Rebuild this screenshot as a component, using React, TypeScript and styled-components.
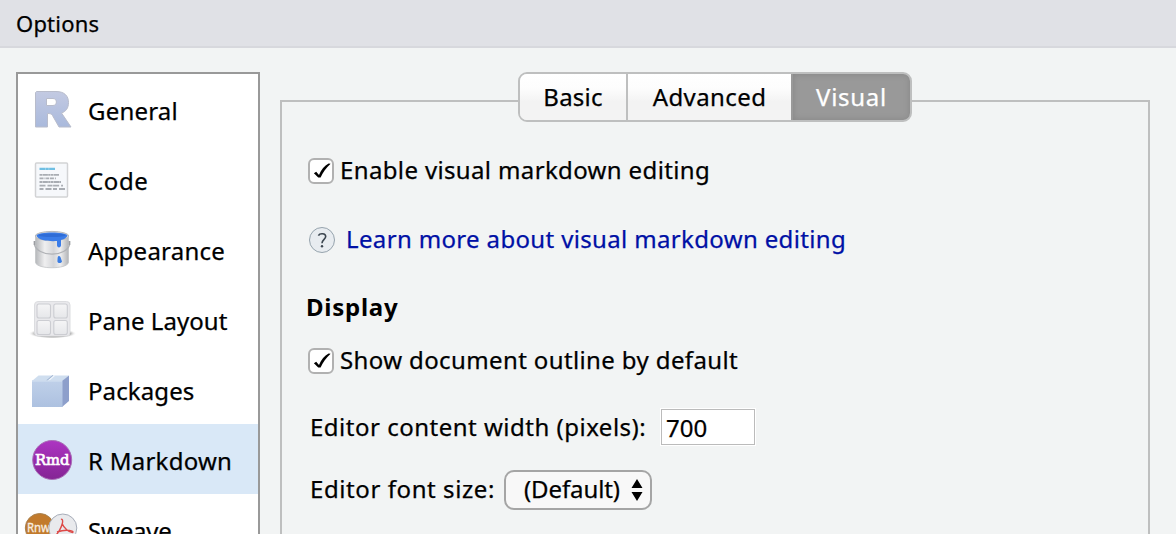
import React, { useState } from "react";
import styled, { createGlobalStyle, css } from "styled-components";

const GlobalStyle = createGlobalStyle`
  *, *::before, *::after { box-sizing: border-box; }
  body {
    margin: 0;
    overflow: hidden;
    background: #f2f4f4;
    color: #000;
    font-family: "Noto Sans", "Liberation Sans", sans-serif;
    font-size: 24px;
    line-height: 34px;
    -webkit-text-stroke: 0.25px;
  }
`;

const Dialog = styled.div`
  height: 534px;
  overflow: hidden;
`;

const TitleBar = styled.header`
  height: 48px;
  padding: 6px 16px 0;
  background: #e0e1e6;
  border-bottom: 2px solid #d7d8dd;
  font-size: 22px;
  letter-spacing: 0.2px;
`;

const Body = styled.div`
  display: flex;
  align-items: flex-start;
  gap: 20px;
  padding: 24px 26px 0 16px;
`;

const Sidebar = styled.nav`
  flex: none;
  width: 244px;
  height: 620px;
  border: 2px solid #999;
  background: #fff;
`;

const SectionItem = styled.div<{ $selected: boolean; $spacing: number }>`
  display: flex;
  align-items: center;
  gap: 8px;
  height: 70px;
  padding-left: 2px;
  background: ${(p) => (p.$selected ? "#d9e8f7" : "#fff")};
  letter-spacing: ${(p) => p.$spacing}px;
  white-space: nowrap;
  cursor: pointer;
`;

const ItemLabel = styled.span`
  padding-top: 4px;
`;

const SectionIcon = styled.svg`
  flex: none;
  width: 60px;
  height: 70px;
  letter-spacing: 0;
  -webkit-text-stroke: 0;
`;

const Content = styled.main`
  flex: 1;
`;

const TabBar = styled.div`
  position: relative;
  display: flex;
  width: 394px;
  height: 50px;
  margin: 0 auto;
  border: 2px solid #bebfbf;
  border-radius: 9px;
  overflow: hidden;
`;

const Tab = styled.button<{ $width: number; $spacing: number; $active: boolean }>`
  flex: none;
  width: ${(p) => p.$width}px;
  padding: 0 0 1px;
  border: 0;
  background: linear-gradient(#fff 0%, #fdfdfd 30%, #f3f3f3 60%, #f3f3f3 100%);
  color: #000;
  font: inherit;
  letter-spacing: ${(p) => p.$spacing}px;
  & + & { border-left: 2px solid #bebfbf; }
  ${(p) =>
    p.$active &&
    css`
      && {
        border-left-color: #999;
        background: #999;
        color: #fff;
        box-shadow: inset 0 0 6px #858585;
      }
    `}
`;

const Panel = styled.section`
  height: 600px;
  margin-top: -22px;
  padding: 56px 24px 0;
  border: 2px solid #bebfbf;
`;

const CheckRow = styled.label<{ $spacing: number }>`
  display: flex;
  align-items: center;
  gap: 6px;
  height: 26px;
  padding-left: 2px;
  letter-spacing: ${(p) => p.$spacing}px;
  white-space: nowrap;
`;

const CheckText = styled.span`
  margin-top: -3px;
`;

const CheckBox = styled.span`
  display: flex;
  width: 26px;
  height: 26px;
  border: 2px solid #b1b1b1;
  border-radius: 6px;
  background: #fff;
`;

const HelpRow = styled.div`
  display: flex;
  align-items: center;
  gap: 10px;
  height: 28px;
  margin-top: 42px;
  padding-left: 2px;
`;

const HelpLink = styled.a`
  margin-top: -2px;
  color: #0010a5;
  letter-spacing: 0.35px;
  white-space: nowrap;
`;

const Heading = styled.h2`
  height: 34px;
  margin: 36px 0 24px;
  font-size: 24px;
  font-weight: 700;
  letter-spacing: 0.75px;
  -webkit-text-stroke: 0;
`;

const Field = styled.div<{ $height: number; $top: number; $gap: number }>`
  display: flex;
  align-items: center;
  gap: ${(p) => p.$gap}px;
  height: ${(p) => p.$height}px;
  margin-top: ${(p) => p.$top}px;
  padding-left: 4px;
`;

const FieldLabel = styled.span<{ $width: number; $spacing: number; $raise?: number }>`
  width: ${(p) => p.$width}px;
  padding-bottom: ${(p) => p.$raise ?? 0}px;
  letter-spacing: ${(p) => p.$spacing}px;
  white-space: nowrap;
`;

const NumberInput = styled.input`
  width: 94px;
  height: 36px;
  padding: 0 2px 0 4px;
  border: 1px solid #bbb;
  outline: 1px solid #fff;
  background: #fff;
  color: #000;
  font: inherit;
`;

const Select = styled.button`
  display: flex;
  align-items: center;
  justify-content: space-between;
  width: 148px;
  height: 40px;
  padding: 0 7px 0 18px;
  border: 2px solid #a5a5a5;
  border-radius: 10px;
  background: #f8f8f8;
  color: #000;
  font: inherit;
  letter-spacing: -0.1px;
`;

const SelectValue = styled.span`
  padding-bottom: 2px;
`;

function CheckMark() {
  return (
    <CheckBox>
      <svg width="22" height="22" viewBox="0 0 22 22">
        <path d="M3.900 13.200l2.300-1.500 2.800 3.200C11.200 9.700 14.400 6 18.600 3.600l2 .1C16 8 13 12.400 10.600 17.400H8.200Z" fill="#000" />
      </svg>
    </CheckBox>
  );
}

const icons: Record<string, React.ReactNode> = {
  General: (
    <>
      <defs>
        <linearGradient id="gr" x1="0" y1="0" x2="0" y2="1">
          <stop offset="0" stopColor="#c3cae2" />
          <stop offset="1" stopColor="#a9b9dc" />
        </linearGradient>
      </defs>
      <path
        fillRule="evenodd"
        d="M36.500 17.500H56C64.500 17.500 68.500 22 68.500 28.500C68.500 34 66 37.500 61.500 39L71 53H59L52.500 41.500C51.500 39.800 50 39.500 47.500 39.500V53H35.500V18.500ZM46.500 24.500V31.500H53C57.500 31.500 57.500 24.500 53 24.500Z"
        fill="url(#gr)"
        stroke="#b8bccb"
      />
    </>
  ),
  Code: (
    <>
      <rect x="35.500" y="19" width="32" height="34" rx="1" fill="#f6f8fb" stroke="#d2d3d5" strokeWidth="1.500" />
      <path d="M39.500 24.800H55" stroke="#6fbfe3" strokeWidth="2.200" strokeDasharray="6 .3 3 .3" />
      <g stroke="#a9adb3" strokeWidth="1.800" strokeDasharray="3 .4 5 .3 2 .4">
        <path d="M39.500 30.800H59" />
        <path d="M39.500 34.300H56" strokeDasharray="4 1 1 .6 3 .8" />
        <path d="M39.500 38H61" />
        <path d="M39.500 41.600H63" strokeDasharray="6 2 5 .6" />
        <path d="M39.500 45H65" strokeDasharray="4 2 6 1.500" />
      </g>
    </>
  ),
  Appearance: (
    <>
      <defs>
        <linearGradient id="metal">
          <stop offset="0" stopColor="#b5b7ba" />
          <stop offset=".28" stopColor="#efeff0" />
          <stop offset=".55" stopColor="#d5d6d9" />
          <stop offset=".75" stopColor="#eeeeef" />
          <stop offset="1" stopColor="#b2b4b7" />
        </linearGradient>
      </defs>
      <path d="M35.500 22V48.500C37 55.500 67 55.500 68.500 48.500V22Z" fill="url(#metal)" stroke="#c2c4c7" strokeWidth=".8" />
      <ellipse cx="52" cy="22" rx="16.800" ry="4.600" fill="#d7d9dc" stroke="#b7b9bd" />
      <path d="M36.500 21.500C38 17.500 66 17.500 67.500 21.500C66 25 62.500 25.500 61 26V31.500C60.500 34 57.500 34 57 31.500V27C51 27.500 38 27 36.500 21.500Z" fill="#3a7ce8" />
      <ellipse cx="52" cy="21.200" rx="13.500" ry="1.800" fill="#2f6cd6" />
      <path d="M34.500 27V31C36 36 43 40.200 52 40.200C61 40.200 68 36 69.500 31V27" fill="none" stroke="#b0b2b6" strokeWidth="1.200" />
      <path d="M34.500 27V31M69.500 27V31" stroke="#9b9da1" strokeWidth="1.600" />
      <path d="M57.600 44C58 41 60.500 42 60.800 44L62 47.500C61 49.500 58 49.500 57.400 47.500Z" fill="#3b7de2" />
    </>
  ),
  "Pane Layout": (
    <>
      <defs>
        <radialGradient id="shade">
          <stop offset="0" stopColor="#888" />
          <stop offset=".75" stopColor="#b5b5b5" />
          <stop offset="1" stopColor="#fff" stopOpacity="0" />
        </radialGradient>
        <linearGradient id="pane" x1="0" y1="0" x2="0" y2="1">
          <stop offset="0" stopColor="#f5f5f6" />
          <stop offset="1" stopColor="#e6e7ea" />
        </linearGradient>
      </defs>
      <ellipse cx="52.500" cy="49.500" rx="24" ry="5" fill="url(#shade)" />
      <rect x="34.500" y="17.500" width="35.500" height="34.500" rx="3.500" fill="#e9e9ec" stroke="#dcdde0" />
      <g fill="url(#pane)" stroke="#cccdd2" strokeWidth="1.100">
        <rect x="37" y="20" width="13.500" height="14" rx="2" />
        <rect x="53.800" y="20" width="13.500" height="14" rx="2" />
        <rect x="37" y="36.500" width="13.500" height="14" rx="2" />
        <rect x="53.800" y="36.500" width="13.500" height="14" rx="2" />
      </g>
    </>
  ),
  Packages: (
    <>
      <defs>
        <linearGradient id="box" x1="0" y1="0" x2="0" y2="1">
          <stop offset="0" stopColor="#bfd0e9" />
          <stop offset="1" stopColor="#adc1e0" />
        </linearGradient>
      </defs>
      <path d="M32 27L38.500 21.500H69L62.500 27Z" fill="#cfdeef" />
      <path d="M46.500 27L53 21.500" stroke="#9fb3d1" strokeWidth="1.200" />
      <path d="M48 27L54.500 21.500" stroke="#f0f6fc" strokeWidth="1.200" />
      <path d="M62 27L69 21.500V47L62 53Z" fill="#8d9fcb" />
      <rect x="32" y="26.500" width="30.500" height="26.500" fill="url(#box)" />
      <path d="M32 27H62" stroke="#d4e1f1" />
    </>
  ),
  "R Markdown": (
    <>
      <defs>
        <linearGradient id="rmd" x1="0" y1="0" x2="0" y2="1">
          <stop offset="0" stopColor="#ad34c2" />
          <stop offset="1" stopColor="#842494" />
        </linearGradient>
      </defs>
      <circle cx="52.200" cy="36" r="19.500" fill="url(#rmd)" stroke="#a96fb6" />
      <text x="35" y="41.300" textLength="34.500" lengthAdjust="spacingAndGlyphs" fill="#fff" stroke="#fff" strokeWidth=".7" fontFamily="'DejaVu Serif', serif" fontSize="15.500">
        Rmd
      </text>
    </>
  ),
  Sweave: (
    <>
      <circle cx="39.800" cy="34" r="14.500" fill="#c27a2c" stroke="#a8814f" />
      <text x="27" y="38" textLength="23" lengthAdjust="spacingAndGlyphs" fill="#f8eee0" stroke="#f8eee0" strokeWidth=".3" fontFamily="Noto Sans, sans-serif" fontSize="12.500">
        Rnw
      </text>
      <circle cx="62.800" cy="34" r="14" fill="#e9eaed" stroke="#a7adb9" />
      <path
        d="M61 25.500C62.500 24.500 63 27 62.300 29.500C61.500 33 58.500 39 55.500 41.500M62 29.500C64 34 69 38.500 72.500 38.500C75 37 67 34.500 57 38"
        fill="none"
        stroke="#dd4a48"
        strokeWidth="1.400"
      />
    </>
  ),
};

const sections = [
  { name: "General", spacing: 0.2 },
  { name: "Code", spacing: 0.6 },
  { name: "Appearance", spacing: 0.25 },
  { name: "Pane Layout", spacing: 0.05 },
  { name: "Packages", spacing: 0.1 },
  { name: "R Markdown", spacing: 0.25 },
  { name: "Sweave", spacing: -0.2 },
];

const tabs = [
  { name: "Basic", width: 107, spacing: 0.2 },
  { name: "Advanced", width: 164, spacing: 0.4 },
  { name: "Visual", width: 119, spacing: 0.7 },
].map((t) => (t.name === "Basic" ? { ...t, width: 106 } : t.name === "Advanced" ? { ...t, width: 165 } : t));

export default function App() {
  const [section, setSection] = useState("R Markdown");
  const [tab, setTab] = useState("Visual");
  return (
    <Dialog>
      <GlobalStyle />
      <TitleBar>Options</TitleBar>
      <Body>
        <Sidebar>
          {sections.map((s) => (
            <SectionItem key={s.name} $selected={s.name === section} $spacing={s.spacing} onClick={() => setSection(s.name)}>
              <SectionIcon viewBox="20 0 60 70">{icons[s.name]}</SectionIcon>
              <ItemLabel>{s.name}</ItemLabel>
            </SectionItem>
          ))}
        </Sidebar>
        <Content>
          <TabBar>
            {tabs.map((t) => (
              <Tab key={t.name} $width={t.width} $spacing={t.spacing} $active={t.name === tab} onClick={() => setTab(t.name)}>
                {t.name}
              </Tab>
            ))}
          </TabBar>
          <Panel>
            <CheckRow $spacing={0.36}>
              <CheckMark />
              <CheckText>Enable visual markdown editing</CheckText>
            </CheckRow>
            <HelpRow>
              <svg width="28" height="28" viewBox="0 0 28 28">
                <circle cx="14" cy="14" r="12.500" fill="#e8ecf0" stroke="#96a3ad" />
                <path d="M10.400 9.600C11.600 7 17.700 6.800 17.700 10.600C17.700 13.300 14 13.500 14 17.300" fill="none" stroke="#3c4650" strokeWidth="1.600" />
                <circle cx="14" cy="20.300" r="1.200" fill="#3c4650" />
              </svg>
              <HelpLink>Learn more about visual markdown editing</HelpLink>
            </HelpRow>
            <Heading>Display</Heading>
            <CheckRow $spacing={0.38}>
              <CheckMark />
              <CheckText>Show document outline by default</CheckText>
            </CheckRow>
            <Field $height={36} $top={35} $gap={15}>
              <FieldLabel $width={336} $spacing={0.5}>Editor content width (pixels):</FieldLabel>
              <NumberInput defaultValue="700" />
            </Field>
            <Field $height={40} $top={25} $gap={8}>
              <FieldLabel $width={186} $spacing={0.58} $raise={2}>Editor font size:</FieldLabel>
              <Select>
                <SelectValue>(Default)</SelectValue>
                <svg width="12" height="24" viewBox="0 0 12 24">
                  <path d="M6 1L11.500 10H.5ZM6 23L11.500 14H.5Z" />
                </svg>
              </Select>
            </Field>
          </Panel>
        </Content>
      </Body>
    </Dialog>
  );
}
